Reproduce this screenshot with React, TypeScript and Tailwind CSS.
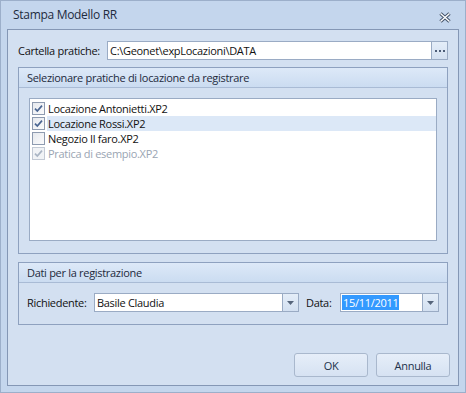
import React from "react";

const font = { fontFamily: '"Open Sans", "Noto Sans", sans-serif' };

function Check({ checked, disabled }: { checked: boolean; disabled?: boolean }) {
  return (
    <div
      className={
        "w-[13px] h-[13px] border flex items-center justify-center shrink-0 " +
        (disabled
          ? "border-[#c3cad5] bg-[#f1f3f6]"
          : "border-[#8e9bb0] bg-gradient-to-br from-[#e6e9ee] to-[#fbfbfc]")
      }
    >
      {checked && (
        <svg width="11" height="11" viewBox="0 0 11 11">
          <path
            d="M2 5.6 L4.3 8 L9 2.6"
            fill="none"
            stroke={disabled ? "#aab5c4" : "#4a6591"}
            strokeWidth="1.7"
          />
        </svg>
      )}
    </div>
  );
}

function Arrow() {
  return (
    <svg width="7" height="4" viewBox="0 0 7 4">
      <path d="M0 0 H7 L3.5 4 Z" fill="#56657b" />
    </svg>
  );
}

function DropBtn() {
  return (
    <div className="w-[17px] h-full border border-[#9aabc4] bg-gradient-to-b from-[#e4edf8] to-[#d3e0f1] flex items-center justify-center">
      <Arrow />
    </div>
  );
}

function GroupHeader({ text }: { text: string }) {
  return (
    <div className="h-[20px] border-b border-[#a9bbd5] bg-gradient-to-b from-[#dde9f8] to-[#cbdcf1] flex items-center pl-[8px] text-[#1d2a3c]">
      {text}
    </div>
  );
}

export default function App() {
  const items = [
    { t: "Locazione Antonietti.XP2", c: true },
    { t: "Locazione Rossi.XP2", c: true, sel: true },
    { t: "Negozio Il faro.XP2", c: false },
    { t: "Pratica di esempio.XP2", c: true, dis: true },
  ];
  return (
    <div
      style={font}
      className="w-[466px] h-[393px] bg-[#c4d6ed] border border-[#9cafca] flex flex-col text-[11px] tracking-[-0.3px] text-[#111] leading-none"
    >
      <div className="h-[28px] flex items-center justify-between pl-[12px] pr-[14px]">
        <span className="text-[12px] text-[#1e2b3d] pb-[1px]">Stampa Modello RR</span>
        <svg width="12" height="11" viewBox="0 0 12 11" className="mt-[4px]">
          <path d="M1.5 1.5 L10.5 9.5 M10.5 1.5 L1.5 9.5" stroke="#44546b" strokeWidth="3.4" />
          <path d="M1.5 1.5 L10.5 9.5 M10.5 1.5 L1.5 9.5" stroke="#ffffff" strokeWidth="1.4" />
        </svg>
      </div>
      <div className="mx-[6px] mb-[6px] flex-1 border border-[#8497b5] bg-[#d3e0f1] flex flex-col px-[10px] pt-[11px]">
        <div className="flex items-center h-[19px]">
          <span className="w-[89px] shrink-0">Cartella pratiche:</span>
          <div className="flex-1 h-full bg-white border border-[#9aabc4] border-r-0 flex items-center pl-[2px]">
            C:\Geonet\expLocazioni\DATA
          </div>
          <div className="w-[17px] h-full border border-[#9aabc4] bg-gradient-to-b from-[#e4edf8] to-[#d3e0f1] flex items-center justify-center gap-[2px] pt-[1px]">
            <div className="w-[2px] h-[2px] bg-[#4d5d78]" />
            <div className="w-[2px] h-[2px] bg-[#4d5d78]" />
            <div className="w-[2px] h-[2px] bg-[#4d5d78]" />
          </div>
        </div>

        <div className="mt-[7px] h-[187px] border border-[#8ea1bf] flex flex-col">
          <GroupHeader text="Selezionare pratiche di locazione da registrare" />
          <div className="mt-[10px] mx-[10px] h-[143px] border border-[#9aabc4] bg-white pt-[2px] flex flex-col">
            {items.map((it) => (
              <div key={it.t} className="h-[15px] flex items-center">
                <div className="ml-[2px]">
                  <Check checked={it.c} disabled={it.dis} />
                </div>
                <div
                  className={
                    "ml-[2px] flex-1 h-full flex items-center pl-[1px] " +
                    (it.sel ? "bg-[#dce8f7] " : "") +
                    (it.dis ? "text-[#9aa5b3]" : "")
                  }
                >
                  {it.t}
                </div>
              </div>
            ))}
          </div>
        </div>

        <div className="mt-[8px] h-[63px] border border-[#8ea1bf] flex flex-col">
          <GroupHeader text="Dati per la registrazione" />
          <div className="mt-[10px] h-[19px] flex items-center pl-[8px]">
            <span className="w-[67px] shrink-0">Richiedente:</span>
            <div className="w-[205px] h-full flex">
              <div className="flex-1 h-full bg-white border border-[#9aabc4] border-r-0 flex items-center pl-[2px]">
                Basile Claudia
              </div>
              <DropBtn />
            </div>
            <span className="ml-[7px] w-[34px] shrink-0">Data:</span>
            <div className="w-[99px] h-full flex">
              <div className="flex-1 h-full bg-white border border-[#9aabc4] border-r-0 flex items-center pl-[1px]">
                <span className="bg-[#3399ff] text-white h-[15px] flex items-center px-[1px]">15/11/2011</span>
              </div>
              <DropBtn />
            </div>
          </div>
        </div>

        <div className="mt-[28px] flex justify-end gap-[8px] mr-[-2px]">
          <div className="w-[74px] h-[24px] rounded-[3px] border border-[#a9b8cd] bg-gradient-to-b from-[#e6eef9] to-[#d6e2f2] flex items-center justify-center text-[#22324b]">
            OK
          </div>
          <div className="w-[74px] h-[24px] rounded-[3px] border border-[#a9b8cd] bg-gradient-to-b from-[#e6eef9] to-[#d6e2f2] flex items-center justify-center text-[#22324b]">
            Annulla
          </div>
        </div>
      </div>
    </div>
  );
}
